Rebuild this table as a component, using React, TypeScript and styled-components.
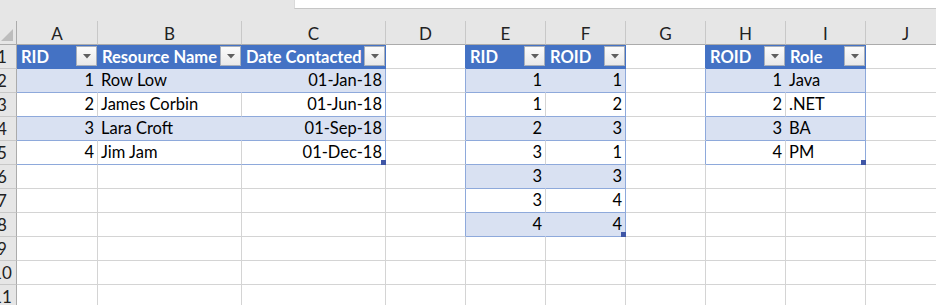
import React from "react";
import styled, { createGlobalStyle } from "styled-components";

const GlobalStyle = createGlobalStyle`
  html, body { margin: 0; padding: 0; background: #e6e6e6; }
  body { width: 936px; height: 305px; overflow: hidden; }
  * { box-sizing: border-box; }
`;

const FONT = `"Lato", "Open Sans", "Liberation Sans", sans-serif`;

const BLUE = "#4472c4";
const BAND = "#d9e1f2";
const TABLE_LINE = "#8ea9db";
const GRID = "#d4d4d4";

const COLS = ["A", "B", "C", "D", "E", "F", "G", "H", "I", "J"];
const WIDTHS = [81, 144, 144, 80, 80, 80, 80, 80, 80, 80];
const ROW_COUNT = 11;

type Align = "left" | "right";
type Value = { text: string; align: Align };

type Table = {
  firstCol: number;
  headers: string[];
  aligns: Align[];
  rows: (string | number)[][];
};

const TABLES: Table[] = [
  {
    firstCol: 0,
    headers: ["RID", "Resource Name", "Date Contacted"],
    aligns: ["right", "left", "right"],
    rows: [
      [1, "Row Low", "01-Jan-18"],
      [2, "James Corbin", "01-Jun-18"],
      [3, "Lara Croft", "01-Sep-18"],
      [4, "Jim Jam", "01-Dec-18"],
    ],
  },
  {
    firstCol: 4,
    headers: ["RID", "ROID"],
    aligns: ["right", "right"],
    rows: [
      [1, 1],
      [1, 2],
      [2, 3],
      [3, 1],
      [3, 3],
      [3, 4],
      [4, 4],
    ],
  },
  {
    firstCol: 7,
    headers: ["ROID", "Role"],
    aligns: ["right", "left"],
    rows: [
      [1, "Java"],
      [2, ".NET"],
      [3, "BA"],
      [4, "PM"],
    ],
  },
];

type CellInfo = {
  kind: "plain" | "header" | "data";
  bg: string;
  right: string;
  bottom: string;
  value?: Value;
  handle?: boolean;
};

// Work out fill, borders and content of each worksheet cell (row is 1-based)
function cellAt(row: number, col: number): CellInfo {
  for (const t of TABLES) {
    const last = t.firstCol + t.headers.length - 1;
    const lastRow = t.rows.length + 1;
    if (row > lastRow) continue;
    if (col === t.firstCol - 1) {
      return {
        kind: "plain",
        bg: "#ffffff",
        right: row === 1 ? BLUE : TABLE_LINE,
        bottom: GRID,
      };
    }
    if (col < t.firstCol || col > last) continue;
    const i = col - t.firstCol;
    if (row === 1) {
      return {
        kind: "header",
        bg: BLUE,
        right: BLUE,
        bottom: BLUE,
        value: { text: t.headers[i], align: "left" },
      };
    }
    const banded = row % 2 === 0;
    const bg = banded ? BAND : "#ffffff";
    return {
      kind: "data",
      bg,
      right: col === last ? TABLE_LINE : banded ? BAND : GRID,
      bottom: TABLE_LINE,
      value: { text: String(t.rows[row - 2][i]), align: t.aligns[i] },
      handle: row === lastRow && col === last,
    };
  }
  return { kind: "plain", bg: "#ffffff", right: GRID, bottom: GRID };
}

const Screen = styled.div`
  width: 936px;
  height: 305px;
  overflow: hidden;
  background: #e6e6e6;
  font-family: ${FONT};
`;

const TopStrip = styled.div`
  height: 21px;
  display: flex;
  align-items: flex-start;
`;

const FormulaBox = styled.div`
  margin-left: 294px;
  flex: 1;
  height: 9px;
  background: #ffffff;
  border-bottom: 1px solid #c6c6c6;
  border-left: 1px solid #dadada;
`;

const Sheet = styled.div`
  display: grid;
  grid-template-columns: 17px ${WIDTHS.map((w) => `${w}px`).join(" ")};
  grid-auto-rows: 24px;
  width: ${17 + WIDTHS.reduce((a, b) => a + b, 0)}px;
`;

const Corner = styled.div`
  background: #e6e6e6;
  border-right: 1px solid #ababab;
  border-bottom: 1px solid #ababab;
  display: flex;
  align-items: flex-end;
  justify-content: flex-end;
  padding: 0 3px 3px 0;
`;

const ColHead = styled.div`
  background: #e6e6e6;
  border-right: 1px solid #c8c8c8;
  border-bottom: 1px solid #ababab;
  display: flex;
  align-items: center;
  justify-content: center;
  font-size: 17px;
  color: #222;
  padding-top: 1px;
`;

const RowHead = styled.div`
  background: #e6e6e6;
  border-right: 1px solid #ababab;
  border-bottom: 1px solid #c8c8c8;
  overflow: hidden;
  display: flex;
  align-items: center;
  font-size: 17px;
  color: #222;
`;

const RowNum = styled.span`
  flex: none;
  width: 30px;
  margin-left: -13px;
  text-align: center;
`;

const Cell = styled.div<{ $bg: string; $right: string; $bottom: string; $align: Align; $head: boolean }>`
  position: relative;
  background: ${(p) => p.$bg};
  border-right: 1px solid ${(p) => p.$right};
  border-bottom: 1px solid ${(p) => p.$bottom};
  display: flex;
  align-items: ${(p) => (p.$head ? "center" : "flex-end")};
  justify-content: ${(p) => (p.$align === "right" ? "flex-end" : "flex-start")};
  padding: ${(p) => (p.$head ? "0 0 0 4px" : "0 3px 2px 3px")};
  font-size: 16.5px;
  font-weight: ${(p) => (p.$head ? 700 : 400)};
  color: ${(p) => (p.$head ? "#ffffff" : "#000000")};
  white-space: nowrap;
  overflow: visible;
`;

const HeadLabel = styled.span`
  flex: 1;
  overflow: hidden;
`;

const FilterButton = styled.div`
  flex: none;
  width: 21px;
  height: 20px;
  margin-bottom: 1px;
  background: linear-gradient(#fbfbfb, #e9e9e9);
  border: 1px solid #a9b0bb;
  display: flex;
  align-items: center;
  justify-content: center;
`;

const ResizeHandle = styled.span`
  position: absolute;
  right: -1px;
  bottom: -1px;
  width: 5px;
  height: 5px;
  background: #3f56a6;
`;

function FilterArrow() {
  return (
    <svg width="8" height="5" viewBox="0 0 8 5" aria-hidden>
      <path d="M0 0 H8 L4 4.5 Z" fill="#5f5f5f" />
    </svg>
  );
}

function CornerTriangle() {
  return (
    <svg width="12" height="12" viewBox="0 0 12 12" aria-hidden>
      <path d="M12 0 V12 H0 Z" fill="#bdbdbd" />
    </svg>
  );
}

export default function App() {
  const rows = Array.from({ length: ROW_COUNT }, (_, r) => r + 1);
  return (
    <Screen>
      <GlobalStyle />
      <TopStrip>
        <FormulaBox />
      </TopStrip>
      <Sheet>
        <Corner>
          <CornerTriangle />
        </Corner>
        {COLS.map((c) => (
          <ColHead key={c}>{c}</ColHead>
        ))}
        {rows.map((r) => (
          <React.Fragment key={r}>
            <RowHead>
              <RowNum>{r}</RowNum>
            </RowHead>
            {COLS.map((c, ci) => {
              const info = cellAt(r, ci);
              const head = info.kind === "header";
              return (
                <Cell
                  key={c}
                  $bg={info.bg}
                  $right={info.right}
                  $bottom={info.bottom}
                  $align={info.value?.align ?? "left"}
                  $head={head}
                >
                  {head ? (
                    <>
                      <HeadLabel>{info.value?.text}</HeadLabel>
                      <FilterButton>
                        <FilterArrow />
                      </FilterButton>
                    </>
                  ) : (
                    info.value?.text
                  )}
                  {info.handle && <ResizeHandle />}
                </Cell>
              );
            })}
          </React.Fragment>
        ))}
      </Sheet>
    </Screen>
  );
}
